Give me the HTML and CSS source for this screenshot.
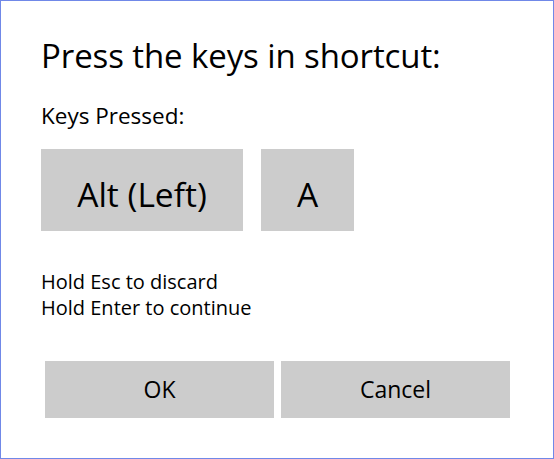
FILE: index.html
```html
<!DOCTYPE html>
<html>
<head>
<meta charset="utf-8">
<link rel="stylesheet" href="styles.css">
</head>
<body>
<div class="dialog">
  <div class="title">Press the keys in shortcut:</div>
  <div class="label">Keys Pressed:</div>
  <div class="keys">
    <div class="key key-wide">Alt (Left)</div>
    <div class="key key-narrow">A</div>
  </div>
  <div class="hints">
    <div class="hint">Hold Esc to discard</div>
    <div class="hint">Hold Enter to continue</div>
  </div>
  <div class="buttons">
    <div class="btn">OK</div>
    <div class="btn">Cancel</div>
  </div>
</div>
</body>
</html>
```

FILE: styles.css
```css
html, body {
  margin: 0;
  padding: 0;
  background: #ffffff;
}
.dialog {
  box-sizing: border-box;
  width: 554px;
  height: 459px;
  border: 1px solid #7088e8;
  padding: 35px 40px 0 40px;
  font-family: "Open Sans", "Noto Sans", sans-serif;
  color: #000000;
}
.title {
  font-size: 33px;
  letter-spacing: -0.1px;
  line-height: 40px;
  height: 40px;
  white-space: nowrap;
}
.label {
  margin-top: 26px;
  font-size: 22.5px;
  line-height: 28px;
}
.keys {
  display: flex;
  gap: 18px;
  margin-top: 19px;
}
.key {
  height: 82px;
  background: #cccccc;
  display: flex;
  align-items: center;
  justify-content: center;
  font-size: 33.5px;
  padding-top: 8px;
  box-sizing: border-box;
}
.key-wide { width: 202px; }
.key-narrow { width: 93px; }
.hints {
  margin-top: 38px;
  font-size: 20px;
  line-height: 26px;
}
.buttons {
  display: flex;
  gap: 7px;
  margin-top: 40px;
  margin-left: 4px;
}
.btn {
  width: 229px;
  height: 57px;
  background: #cccccc;
  display: flex;
  align-items: center;
  justify-content: center;
  font-size: 23px;
  padding-bottom: 2px;
  box-sizing: border-box;
}
```
